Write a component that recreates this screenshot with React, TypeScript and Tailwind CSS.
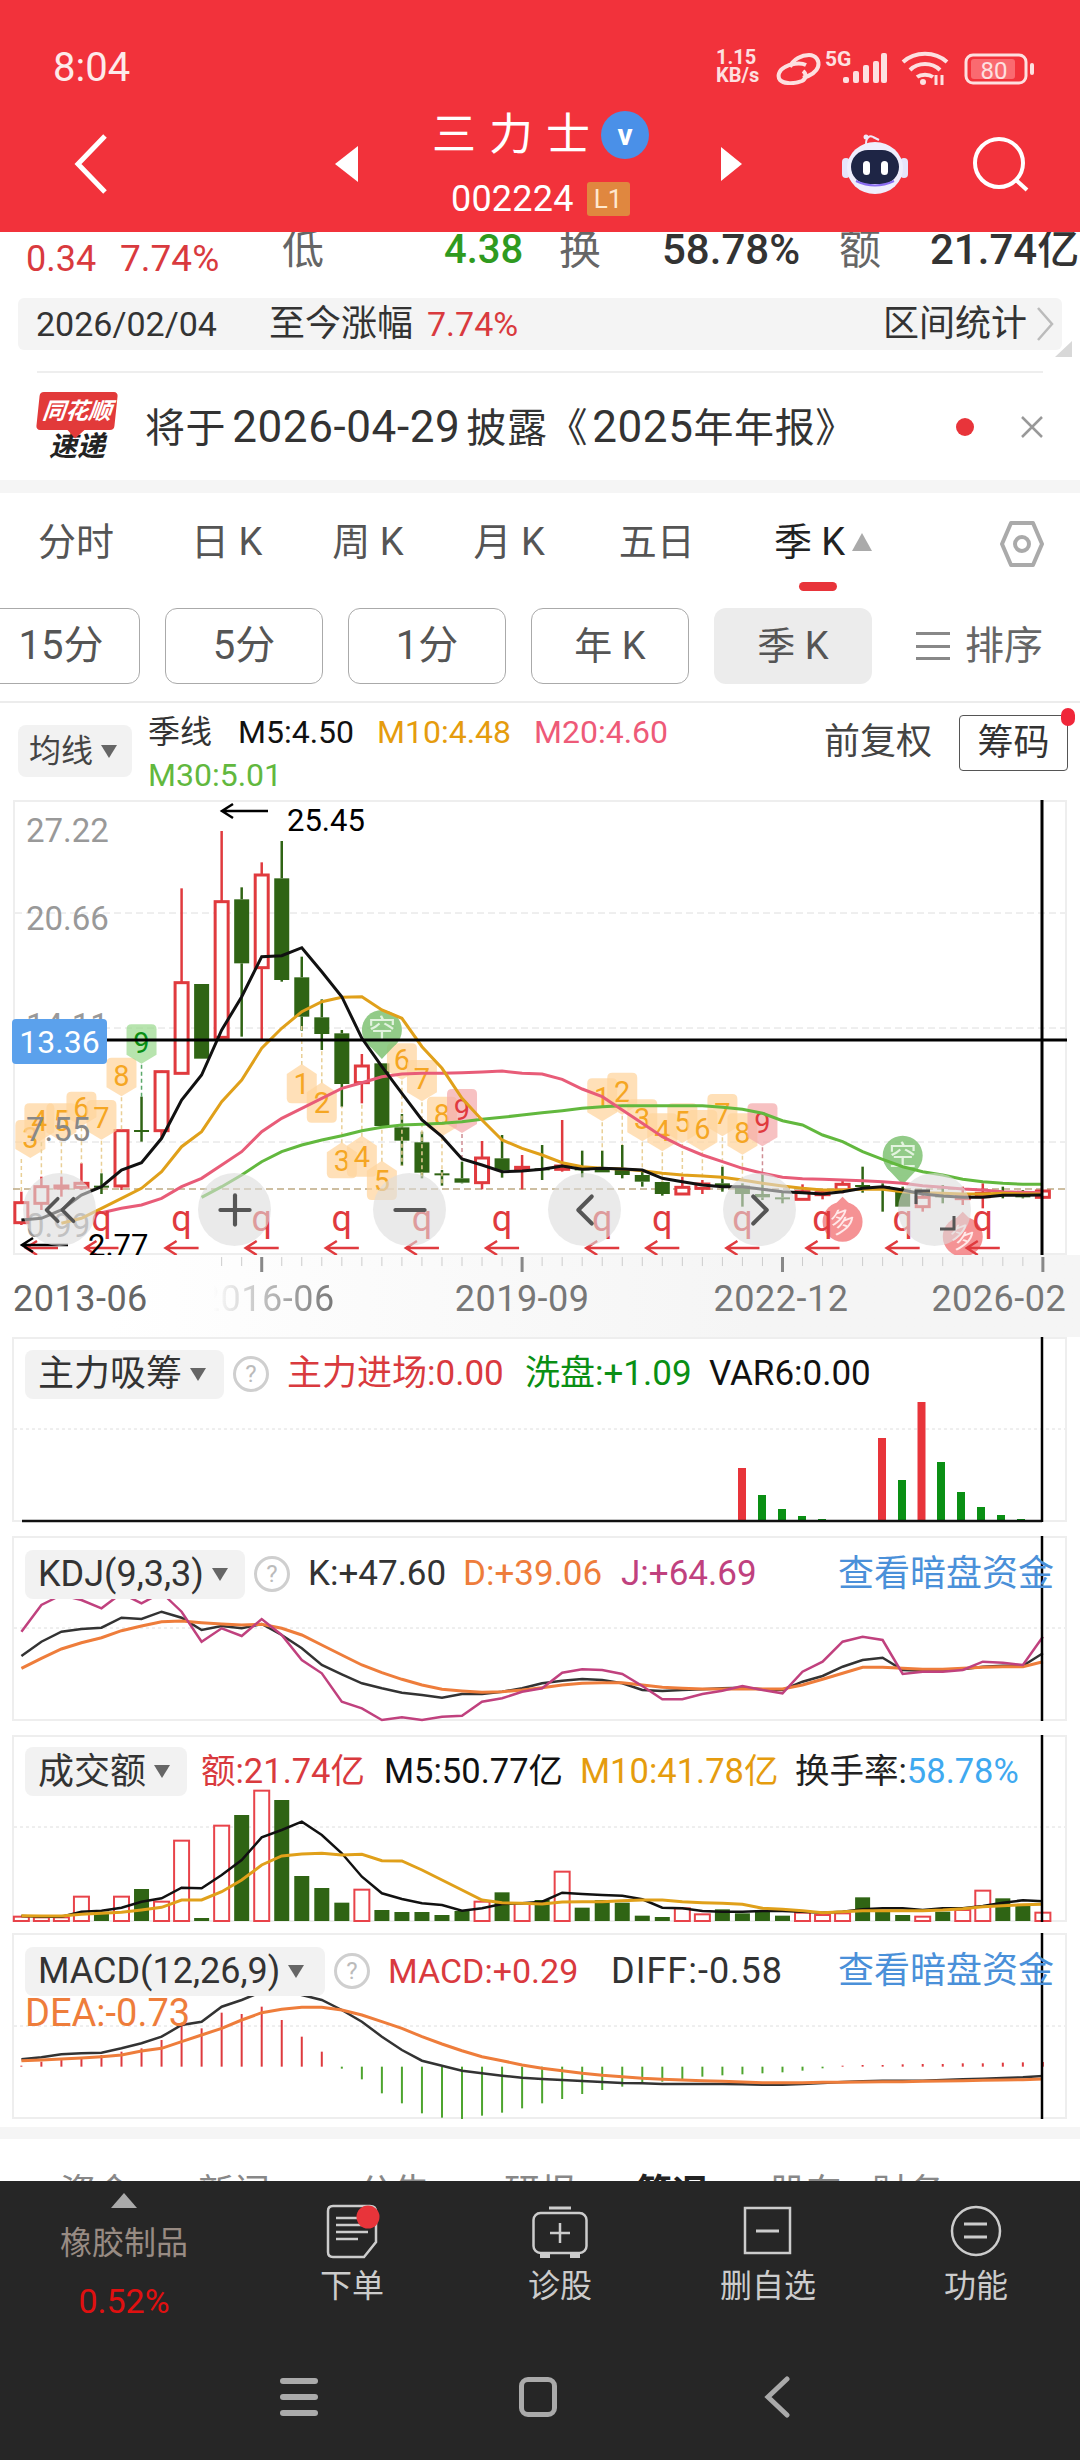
import React from 'react';
import { ChevronsLeft, ChevronLeft, ChevronRight, Plus, Minus } from 'lucide-react';

const RED = '#e03a3e';
const GREEN = '#2f6414';

// every series has one point per quarter, x comes from the index
const X = (i: number) => 21.35 + 20.03 * i;
// y values were read off at 3x, so they are divided back down here
const toY = (base: number) => (z: number) => base + z / 3;

// [high, top, bottom, low, up?]
const candles: [number, number, number, number, number][] = [
  [1205, 1238, 1298, 1305, 1], [1160, 1190, 1240, 1260, 1], [1160, 1188, 1192, 1220, 1], [1120, 1180, 1192, 1200, 1],
  [1150, 1187, 1190, 1212, 0], [1020, 1022, 1188, 1200, 1], [920, 1020, 1024, 1055, 0], [842, 845, 1022, 1045, 1],
  [295, 578, 850, 850, 1], [582, 582, 806, 806, 0], [123, 335, 742, 742, 1], [292, 328, 520, 740, 0],
  [217, 255, 533, 750, 1], [153, 265, 570, 575, 0], [500, 562, 680, 722, 0], [628, 682, 732, 780, 0],
  [720, 730, 882, 950, 0], [792, 828, 878, 940, 1], [820, 820, 1008, 1008, 0], [972, 1012, 1052, 1127, 0],
  [1025, 1057, 1148, 1165, 0], [1140, 1150, 1154, 1187, 0], [1115, 1165, 1178, 1180, 0], [1053, 1104, 1178, 1198, 1],
  [1035, 1105, 1140, 1163, 0], [1095, 1132, 1136, 1198, 1], [1065, 1135, 1140, 1170, 0], [990, 1128, 1138, 1145, 1],
  [1082, 1135, 1140, 1162, 0], [1082, 1135, 1147, 1147, 0], [1065, 1140, 1155, 1165, 0], [1140, 1155, 1175, 1190, 0],
  [1175, 1176, 1212, 1217, 0], [1160, 1192, 1212, 1215, 1], [1170, 1182, 1195, 1212, 1], [1130, 1180, 1188, 1205, 0],
  [1180, 1187, 1212, 1250, 0], [1150, 1212, 1222, 1230, 0], [1205, 1222, 1226, 1240, 0], [1183, 1205, 1228, 1230, 1],
  [1200, 1208, 1212, 1228, 1], [1170, 1183, 1200, 1210, 1], [1130, 1185, 1190, 1208, 0], [1180, 1188, 1195, 1265, 0],
  [1190, 1205, 1250, 1250, 0], [1205, 1222, 1250, 1265, 1], [1185, 1215, 1222, 1240, 0], [1190, 1220, 1225, 1245, 1],
  [1180, 1210, 1220, 1255, 1], [1190, 1212, 1218, 1225, 0], [1200, 1215, 1222, 1225, 0], [1200, 1203, 1222, 1225, 1],
];

const ma5 = [1290, 1285, 1260, 1215, 1190, 1140, 1118, 1045, 930, 855, 720, 620, 500, 497, 473, 545, 620, 745, 830, 910, 990, 1040, 1107, 1125, 1145, 1143, 1138, 1128, 1138, 1135, 1137, 1140, 1165, 1175, 1185, 1190, 1190, 1198, 1205, 1208, 1212, 1205, 1195, 1190, 1200, 1212, 1218, 1222, 1222, 1216, 1216, 1215];
const ma10 = [1300, 1285, 1255, 1225, 1195, 1145, 1070, 1025, 935, 870, 775, 715, 665, 635, 622, 620, 660, 685, 770, 835, 925, 990, 1050, 1075, 1095, 1118, 1130, 1135, 1137, 1142, 1150, 1155, 1158, 1162, 1170, 1180, 1188, 1195, 1200, 1200, 1198, 1198, 1205, 1208, 1210, 1212, 1212, 1210, 1212, 1212];
const ma20 = [1268, 1255, 1245, 1225, 1190, 1165, 1125, 1085, 1025, 985, 955, 925, 895, 878, 860, 852, 850, 850, 848, 846, 843, 850, 852, 868, 897, 920, 960, 1000, 1040, 1070, 1095, 1115, 1135, 1150, 1162, 1166, 1168, 1170, 1172, 1175, 1180, 1187, 1192, 1197, 1200, 1205, 1207, 1208];
const ma30 = [1222, 1190, 1155, 1115, 1085, 1065, 1050, 1037, 1022, 1012, 1005, 1003, 1000, 995, 988, 982, 975, 968, 962, 955, 950, 947, 947, 947, 947, 947, 952, 958, 970, 992, 1005, 1035, 1055, 1085, 1108, 1130, 1145, 1155, 1168, 1175, 1180, 1183, 1183];

const kdjJ = [935, 855, 825, 840, 865, 820, 850, 818, 875, 965, 925, 948, 897, 945, 1020, 1060, 1145, 1165, 1200, 1192, 1200, 1190, 1187, 1145, 1135, 1115, 1105, 1058, 1048, 1050, 1062, 1098, 1138, 1138, 1122, 1112, 1098, 1110, 1120, 1055, 1025, 965, 950, 960, 1062, 1055, 1055, 1050, 1025, 1028, 1035, 950];
const kdjK = [1008, 965, 935, 927, 923, 893, 897, 875, 893, 930, 918, 925, 912, 945, 985, 1035, 1063, 1090, 1105, 1118, 1125, 1133, 1122, 1122, 1115, 1105, 1090, 1082, 1077, 1080, 1090, 1110, 1113, 1110, 1108, 1105, 1103, 1108, 1110, 1085, 1068, 1040, 1020, 1013, 1050, 1052, 1050, 1048, 1040, 1037, 1037, 1000];
const kdjD = [1045, 1015, 987, 968, 953, 932, 918, 905, 903, 908, 912, 915, 913, 925, 945, 975, 1005, 1035, 1058, 1078, 1095, 1108, 1113, 1117, 1115, 1110, 1103, 1095, 1090, 1088, 1088, 1095, 1102, 1105, 1107, 1107, 1106, 1107, 1107, 1095, 1078, 1060, 1042, 1042, 1045, 1048, 1048, 1045, 1042, 1040, 1040, 1025];

// [top, up?]
const volume: [number, number][] = [
  [590, 1], [592, 1], [592, 1], [530, 1], [575, 0], [530, 1], [507, 0], [545, 1], [362, 1], [594, 0], [317, 1], [285, 0], [212, 1],
  [240, 0], [468, 0], [504, 0], [548, 0], [509, 1], [570, 0], [576, 0], [576, 0], [585, 0], [573, 0], [545, 1], [517, 0], [550, 1],
  [540, 0], [455, 1], [563, 0], [540, 0], [548, 0], [587, 0], [591, 0], [565, 1], [583, 1], [568, 0], [580, 0], [573, 0], [587, 0],
  [578, 1], [585, 1], [580, 1], [532, 0], [575, 0], [585, 0], [590, 1], [575, 0], [570, 1], [512, 1], [535, 0], [555, 0], [578, 1],
];
const volM5 = [588, 590, 590, 575, 572, 563, 545, 535, 503, 505, 465, 420, 352, 330, 305, 345, 400, 470, 520, 537, 550, 555, 572, 565, 552, 550, 545, 518, 522, 525, 527, 538, 563, 565, 573, 575, 575, 573, 573, 575, 578, 575, 568, 565, 565, 570, 565, 565, 558, 548, 541, 544];
const volM10 = [587, 588, 588, 583, 580, 577, 570, 562, 540, 540, 515, 480, 435, 408, 402, 400, 405, 403, 422, 423, 450, 480, 510, 540, 548, 550, 552, 546, 545, 545, 542, 540, 540, 545, 548, 550, 553, 565, 568, 572, 578, 575, 572, 572, 572, 572, 570, 566, 560, 557, 554, 553];

const macdBars = [1037, 1025, 1020, 1015, 1005, 995, 985, 960, 908, 925, 878, 882, 860, 900, 950, 995, 1046, 1078, 1120, 1150, 1180, 1193, 1197, 1187, 1178, 1165, 1150, 1137, 1122, 1110, 1100, 1090, 1085, 1078, 1070, 1066, 1063, 1060, 1057, 1052, 1045, 1037, 1035, 1035, 1033, 1032, 1032, 1030, 1030, 1028, 1027, 1026];
const diff = [1018, 1012, 1003, 1000, 998, 985, 970, 950, 915, 905, 860, 840, 815, 813, 825, 840, 870, 905, 950, 990, 1022, 1037, 1052, 1060, 1067, 1073, 1077, 1080, 1083, 1086, 1089, 1090, 1092, 1092, 1092, 1092, 1093, 1094, 1094, 1092, 1089, 1086, 1084, 1082, 1082, 1082, 1080, 1078, 1076, 1074, 1072, 1068];
const dea = [1022, 1020, 1017, 1014, 1010, 1005, 993, 985, 965, 945, 925, 900, 878, 868, 862, 862, 870, 885, 905, 925, 950, 972, 992, 1010, 1022, 1035, 1045, 1052, 1060, 1066, 1070, 1075, 1078, 1080, 1082, 1084, 1086, 1088, 1088, 1088, 1087, 1087, 1086, 1085, 1085, 1084, 1083, 1082, 1081, 1080, 1079, 1077];

// sequence badges, top/bot/end in the same 3x values as the candles
const badges: { i: number; top: number; bot: number; end: number; t: string; kind?: string; dx?: number }[] = [
  { i: 0, top: 990, bot: 1095, end: 1205, t: '3', dx: 9 },
  { i: 1, top: 940, bot: 1045, end: 1160, t: '4', dx: -2 },
  { i: 2, top: 940, bot: 1045, end: 1160, t: '5' },
  { i: 3, top: 905, bot: 1000, end: 1120, t: '6' },
  { i: 4, top: 930, bot: 1040, end: 1150, t: '7' },
  { i: 5, top: 803, bot: 910, end: 1020, t: '8' },
  { i: 6, top: 703, bot: 812, end: 920, t: '9', kind: 'green' },
  { i: 14, top: 825, bot: 940, end: 700, t: '1' },
  { i: 15, top: 880, bot: 998, end: 780, t: '2' },
  { i: 16, top: 1060, bot: 1165, end: 950, t: '3' },
  { i: 17, top: 1040, bot: 1160, end: 940, t: '4' },
  { i: 18, top: 1115, bot: 1230, end: 1008, t: '5' },
  { i: 19, top: 760, bot: 860, end: 1127, t: '6' },
  { i: 20, top: 810, bot: 925, end: 1165, t: '7' },
  { i: 21, top: 920, bot: 1030, end: 1187, t: '8' },
  { i: 22, top: 897, bot: 1020, end: 1115, t: '9', kind: 'red' },
  { i: 29, top: 865, bot: 985, end: 1082, t: '1' },
  { i: 30, top: 848, bot: 965, end: 1065, t: '2' },
  { i: 31, top: 928, bot: 1045, end: 1140, t: '3' },
  { i: 32, top: 970, bot: 1075, end: 1175, t: '4' },
  { i: 33, top: 940, bot: 1050, end: 1160, t: '5' },
  { i: 34, top: 960, bot: 1075, end: 1170, t: '6' },
  { i: 35, top: 912, bot: 1030, end: 1130, t: '7' },
  { i: 36, top: 970, bot: 1085, end: 1180, t: '8' },
  { i: 37, top: 940, bot: 1060, end: 1150, t: '9', kind: 'red' },
];

const qMarks = [4, 8, 12, 16, 20, 24, 29, 32, 36, 40, 44, 48];

const line = (data: number[], start: number, y: (z: number) => number) =>
  data.map((z, k) => `${k ? 'L' : 'M'}${X(k + start).toFixed(1)} ${y(z).toFixed(1)}`).join(' ');

const Arrow = ({ x1, x2, y, color, w = 2.5 }: { x1: number; x2: number; y: number; color: string; w?: number }) => (
  <path d={`M${x1 + 11} ${y - 7} L${x1} ${y} L${x1 + 11} ${y + 7} M${x1} ${y} L${x2} ${y}`} stroke={color} strokeWidth={w} fill="none" />
);

const Badge = ({ b, y }: { b: (typeof badges)[number]; y: (z: number) => number }) => {
  const cx = X(b.i) + (b.dx || 0);
  const top = y(b.top);
  const bot = y(b.bot);
  const fill = b.kind === 'red' ? '#f4a9ab' : b.kind === 'green' ? '#9bd98f' : '#ffd49c';
  const color = b.kind === 'red' ? RED : b.kind === 'green' ? '#0a8f14' : '#f5a623';
  const up = b.end < b.top;
  const stemFrom = up ? top : bot + 4;
  return (
    <g>
      <line x1={X(b.i)} x2={X(b.i)} y1={stemFrom} y2={y(b.end)} stroke={b.kind === 'red' ? '#cf8d93' : b.kind === 'green' ? '#5ba86a' : '#e9cf96'} strokeWidth={1.5} strokeDasharray="4 3" />
      <path
        d={
          up
            ? `M${cx - 15} ${top + 9} L${cx} ${top - 1} L${cx + 15} ${top + 9} L${cx + 15} ${bot - 5} Q${cx + 15} ${bot} ${cx + 10} ${bot} L${cx - 10} ${bot} Q${cx - 15} ${bot} ${cx - 15} ${bot - 5} Z`
            : `M${cx - 10} ${top} L${cx + 10} ${top} Q${cx + 15} ${top} ${cx + 15} ${top + 5} L${cx + 15} ${bot - 6} L${cx} ${bot + 3} L${cx - 15} ${bot - 6} L${cx - 15} ${top + 5} Q${cx - 15} ${top} ${cx - 10} ${top} Z`
        }
        fill={fill}
        opacity={0.72}
      />
      <text x={cx} y={(top + bot) / 2 + 10} textAnchor="middle" fontSize={29} fill={color}>{b.t}</text>
    </g>
  );
};

const PinUp = ({ cx, cy, label }: { cx: number; cy: number; label: string }) => (
  <g opacity={0.85}>
    <path d={`M${cx - 16} ${cy + 12} L${cx} ${cy + 29} L${cx + 16} ${cy + 12} Z`} fill="#7fc274" />
    <circle cx={cx} cy={cy} r={20} fill="#7fc274" />
    <text x={cx} y={cy + 10} textAnchor="middle" fontSize={28} fill="#dff2da">{label}</text>
  </g>
);

const PinDown = ({ cx, cy, label }: { cx: number; cy: number; label: string }) => (
  <g opacity={0.85}>
    <path d={`M${cx - 15} ${cy - 10} L${cx} ${cy - 25} L${cx + 15} ${cy - 10} Z`} fill="#f47f82" />
    <circle cx={cx} cy={cy} r={20} fill="#f47f82" />
    <text x={cx} y={cy + 9} textAnchor="middle" fontSize={26} fill="#ffe6e6" transform={`rotate(-20 ${cx} ${cy})`}>{label}</text>
  </g>
);

const PriceChart = () => {
  const y = toY(790);
  return (
    <svg viewBox="15 802 1050 451" className="absolute left-0 top-0 w-[1050px] h-[451px] overflow-visible">
      {[913, 1028, 1142].map((g) => (
        <line key={g} x1={15} x2={1065} y1={g} y2={g} stroke="#dedede" strokeWidth={1} strokeDasharray="7 4" />
      ))}
      <line x1={13} x2={1065} y1={1189} y2={1189} stroke="#bda982" strokeWidth={1.5} strokeDasharray="7 4" />
      <text x={26} y={842} fontSize={33} fill="#999">27.22</text>
      <text x={26} y={930} fontSize={33} fill="#999">20.66</text>
      <text x={26} y={1037} fontSize={33} fill="#999">14.11</text>
      <text x={26} y={1237} fontSize={33} fill="#999">0.99</text>
      {candles.map(([hi, top, bot, lo, up], i) => {
        const cx = X(i);
        const color = up ? RED : GREEN;
        return (
          <g key={i}>
            <line x1={cx} x2={cx} y1={y(hi)} y2={y(top)} stroke={color} strokeWidth={2.5} />
            <line x1={cx} x2={cx} y1={y(bot)} y2={y(lo)} stroke={color} strokeWidth={2.5} />
            <rect
              x={cx - (up ? 6.5 : 7.5)}
              y={y(top)}
              width={up ? 13 : 15}
              height={Math.max(y(bot) - y(top), 2)}
              fill={up ? '#fff' : GREEN}
              stroke={up ? color : 'none'}
              strokeWidth={3}
            />
          </g>
        );
      })}
      {badges.map((b) => (
        <Badge key={`${b.i}`} b={b} y={y} />
      ))}
      <PinUp cx={X(18)} cy={y(720)} label="空" />
      <PinUp cx={X(44)} cy={y(1097)} label="空" />
      <path d={line(ma30, 9, y)} fill="none" stroke="#62b83e" strokeWidth={3} />
      <path d={line(ma20, 4, y)} fill="none" stroke="#e85c78" strokeWidth={3} />
      <path d={line(ma10, 2, y)} fill="none" stroke="#e0a01a" strokeWidth={3} />
      <path d={line(ma5, 0, y)} fill="none" stroke="#111" strokeWidth={3} />
      <PinDown cx={X(41)} cy={y(1295)} label="多" />
      <PinDown cx={X(47)} cy={y(1340)} label="多" />
      <line x1={107} x2={1067} y1={1040} y2={1040} stroke="#000" strokeWidth={3} />
      <line x1={1042} x2={1042} y1={800} y2={1258} stroke="#000" strokeWidth={3} />
      {qMarks.map((i) => (
        <g key={i}>
          <text x={X(i)} y={1231} textAnchor="middle" fontSize={36} fill={RED}>q</text>
          <Arrow x1={X(i) - 16} x2={X(i) + 17} y={1248} color={RED} />
        </g>
      ))}
      <Arrow x1={26} x2={58} y={1248} color={RED} />
      <Arrow x1={22} x2={68} y={1245} color="#000" />
      <text x={88} y={1256} fontSize={31} fill="#000">2.77</text>
      <Arrow x1={222} x2={268} y={811} color="#000" />
      <text x={287} y={831} fontSize={31} fill="#000">25.45</text>
      <text x={26} y={1141} fontSize={33} fill="#888">7.55</text>
    </svg>
  );
};

const MoneyFlow = () => {
  const bars: [number, number, string][] = [
    [742, 1468, '#e8343a'], [762, 1495, '#0a8f14'], [782, 1509, '#0a8f14'], [802, 1516, '#0a8f14'], [822, 1519, '#0a8f14'], [862, 1520, '#0a8f14'],
    [882, 1438, '#e8343a'], [902, 1480, '#0a8f14'], [921.5, 1402, '#e8343a'], [941, 1462, '#0a8f14'], [961, 1492, '#0a8f14'], [981, 1507, '#0a8f14'], [1001, 1515, '#0a8f14'], [1021, 1519, '#0a8f14'],
  ];
  return (
    <svg viewBox="14 1339 1051 181" className="absolute left-0 top-0 w-[1051px] h-[181px] overflow-visible">
      <line x1={14} x2={1065} y1={1429} y2={1429} stroke="#dedede" strokeDasharray="3 3" />
      {bars.map(([x, top, c]) => (
        <rect key={x} x={x - 4} y={top} width={8} height={1521 - top} fill={c} />
      ))}
      <line x1={22} x2={1042} y1={1521} y2={1521} stroke="#111" strokeWidth={2.5} />
      <line x1={1042} x2={1042} y1={1337} y2={1522} stroke="#000" strokeWidth={2.5} />
    </svg>
  );
};

const Kdj = () => {
  const y = toY(1320);
  return (
    <svg viewBox="14 1538 1051 181" className="absolute left-0 top-0 w-[1051px] h-[181px] overflow-visible">
      <line x1={14} x2={1065} y1={1628} y2={1628} stroke="#dedede" strokeDasharray="3 3" />
      <path d={line(kdjK, 0, y)} fill="none" stroke="#333" strokeWidth={2.5} />
      <path d={line(kdjD, 0, y)} fill="none" stroke="#ee7d3b" strokeWidth={3} />
      <path d={line(kdjJ, 0, y)} fill="none" stroke="#c0417e" strokeWidth={2.5} />
      <line x1={1042} x2={1042} y1={1536} y2={1721} stroke="#000" strokeWidth={2.5} />
    </svg>
  );
};

const Turnover = () => {
  const y = toY(1720);
  return (
    <svg viewBox="14 1737 1051 183" className="absolute left-0 top-0 w-[1051px] h-[183px] overflow-visible">
      <line x1={14} x2={1065} y1={1827} y2={1827} stroke="#dedede" strokeDasharray="3 3" />
      {volume.map(([top, up], i) => (
        <rect
          key={i}
          x={X(i) - 7.5}
          y={y(top)}
          width={15}
          height={y(603) - y(top)}
          fill={up ? '#fff' : GREEN}
          stroke={up ? '#e8434a' : 'none'}
          strokeWidth={2}
        />
      ))}
      <path d={line(volM5, 0, y)} fill="none" stroke="#111" strokeWidth={2.5} />
      <path d={line(volM10, 0, y)} fill="none" stroke="#e0a01a" strokeWidth={3} />
      <line x1={1042} x2={1042} y1={1735} y2={1922} stroke="#000" strokeWidth={2.5} />
    </svg>
  );
};

const Macd = () => {
  const y = toY(1720);
  return (
    <svg viewBox="14 1935 1051 182" className="absolute left-0 top-0 w-[1051px] h-[182px] overflow-visible">
      <line x1={14} x2={1065} y1={2026} y2={2026} stroke="#dedede" strokeDasharray="3 3" />
      {macdBars.map((z, i) => (
        <line key={i} x1={X(i)} x2={X(i)} y1={y(1040)} y2={y(z)} stroke={z < 1040 ? '#de3a3e' : '#4ea52f'} strokeWidth={2} />
      ))}
      <path d={line(diff, 0, y)} fill="none" stroke="#333" strokeWidth={2.5} />
      <path d={line(dea, 0, y)} fill="none" stroke="#ee7d3b" strokeWidth={3} />
      <line x1={1042} x2={1042} y1={1933} y2={2119} stroke="#000" strokeWidth={2.5} />
    </svg>
  );
};

const Caret = () => <span className="ml-[8px] w-0 h-0 border-x-[8px] border-x-transparent border-t-[13px] border-t-[#666]" />;

const Help = () => (
  <span className="w-[36px] h-[36px] rounded-full border-[3px] border-[#cfcfcf] flex items-center justify-center text-[24px] leading-none text-[#bbb]">?</span>
);

const IndicatorBox = ({ label, w }: { label: string; w: string }) => (
  <div className={`${w} h-[49px] ml-[11px] shrink-0 rounded-[8px] bg-[#f2f2f2] flex items-center pl-[13px] text-[36px] text-[#333] whitespace-nowrap`}>
    {label}
    <Caret />
  </div>
);

const DarkPool = () => <span className="ml-auto mr-[11px] text-[36px] text-[#4a90d9] whitespace-nowrap">查看暗盘资金</span>;

const ChartButton = ({ left, children }: { left: string; children: React.ReactNode }) => (
  <div className={`absolute ${left} top-[371px] w-[73px] h-[73px] rounded-full bg-[#dcdcdc]/60 flex items-center justify-center text-[#555]`}>{children}</div>
);

const Status = () => (
  <div className="h-[96px] pt-[40px] flex items-start text-white">
    <span className="ml-[53px] text-[40px] leading-[56px] w-[663px] text-[#fdeaea]">8:04</span>
    <div className="flex flex-col w-[60px] mt-[8px] text-[20px] leading-[18px] font-bold text-[#fde0e0]">
      <span>1.15</span>
      <span>KB/s</span>
    </div>
    <svg width="46" height="32" viewBox="0 0 46 32" className="mt-[13px]" fill="none" stroke="#fde0e0" strokeWidth="4">
      <path d="M14 14 C17 6 26 2 33 2 C40 2 44 8 42 14 C40 20 33 23 27 25" />
      <path d="M30 12 C24 9 14 11 9 14 C3 17 1 23 4 27 C8 31 18 31 26 28 C30 26 31 21 27 18" />
    </svg>
    <svg width="64" height="36" viewBox="0 0 64 36" className="mt-[9px] ml-[3px]" fill="#fde0e0">
      <text x="0" y="17" fontSize="21" fontWeight="700">5G</text>
      <rect x="18" y="28" width="6" height="6" rx="2" />
      <rect x="28" y="22" width="6" height="12" rx="2" />
      <rect x="38" y="16" width="6" height="18" rx="2" />
      <rect x="48" y="12" width="6" height="22" rx="2" />
      <rect x="56" y="4" width="6" height="30" rx="2" />
    </svg>
    <svg width="48" height="36" viewBox="0 0 48 36" className="mt-[11px] ml-[12px]" fill="none" stroke="#fde0e0" strokeWidth="4">
      <path d="M2 11 C14 0 34 0 46 11" />
      <path d="M9 19 C17 11 31 11 39 19" />
      <path d="M16 26 C20 23 28 23 32 26" />
      <circle cx="22" cy="31" r="3" fill="#fde0e0" stroke="none" />
      <path d="M35 24 L35 34 M41 24 L41 34" strokeWidth="3" />
    </svg>
    <svg width="72" height="32" viewBox="0 0 72 32" className="mt-[13px] ml-[15px]">
      <rect x="2" y="2" width="60" height="28" rx="7" fill="none" stroke="#fde0e0" strokeWidth="3" />
      <rect x="7" y="6" width="44" height="20" rx="3" fill="#fa6a70" />
      <rect x="66" y="10" width="4" height="12" rx="2" fill="#fde0e0" />
      <text x="30" y="26" fontSize="24" textAnchor="middle" fill="#fde0e0">80</text>
    </svg>
  </div>
);

const NavBar = () => (
  <div className="h-[136px] flex items-center text-white">
    <svg width="33" height="60" viewBox="0 0 33 60" className="ml-[74px]" fill="none" stroke="#fff" strokeWidth="5">
      <path d="M31 2 L4 30 L31 58" />
    </svg>
    <span className="ml-[228px] w-0 h-0 border-y-[18px] border-y-transparent border-r-[23px] border-r-white" />
    <div className="ml-[74px] w-[217px] h-full pt-[15px] flex flex-col">
      <div className="h-[48px] flex items-center">
        <span className="w-[169px] text-[44px] leading-none tracking-[13px] whitespace-nowrap">三力士</span>
        <span className="w-[48px] h-[48px] rounded-full bg-[#4a90e8] flex items-center justify-center text-[30px] font-bold leading-none">v</span>
      </div>
      <div className="mt-[23px] ml-[19px] flex items-center">
        <span className="text-[36px] leading-[34px] tracking-[0.2px]">002224</span>
        <span className="ml-[13px] w-[43px] h-[34px] rounded-[3px] bg-[#e0873f] flex items-center justify-center text-[26px] leading-none text-[#ffe8cf]">L1</span>
      </div>
    </div>
    <span className="ml-[72px] w-0 h-0 border-y-[17px] border-y-transparent border-l-[21px] border-l-white" />
    <svg width="66" height="60" viewBox="0 0 66 60" className="ml-[100px]">
      <path d="M24 10 C24 3 28 1 31 3 M31 3 L37 6" fill="none" stroke="#f0e8f8" strokeWidth="2" />
      <circle cx="24" cy="3" r="2.5" fill="#f0e8f8" />
      <rect x="0" y="24" width="8" height="20" rx="4" fill="#e6e4fa" />
      <rect x="58" y="24" width="8" height="20" rx="4" fill="#e6e4fa" />
      <ellipse cx="33" cy="34" rx="28" ry="26" fill="#efeefc" />
      <rect x="9" y="16" width="48" height="34" rx="17" fill="#1e2545" />
      <path d="M14 47 Q33 56 52 47" fill="none" stroke="#8a6df0" strokeWidth="2" />
      <rect x="21" y="27" width="7" height="14" rx="3.5" fill="#fff" />
      <rect x="39" y="27" width="7" height="14" rx="3.5" fill="#fff" />
    </svg>
    <svg width="56" height="56" viewBox="0 0 56 56" className="ml-[65px]" fill="none" stroke="#fff" strokeWidth="4">
      <circle cx="26" cy="27" r="24" />
      <path d="M43 44 L54 54" />
    </svg>
  </div>
);

const StatsRow = () => (
  <div className="h-[66px] overflow-hidden flex items-start pl-[26px] whitespace-nowrap">
    <span className="w-[94px] mt-[7px] text-[36px] leading-[40px] text-[#d93a3e]">0.34</span>
    <span className="w-[162px] mt-[7px] text-[37px] leading-[40px] text-[#d93a3e]">7.74%</span>
    <span className="w-[162px] -mt-[2px] text-[42px] leading-[40px] text-[#666]">低</span>
    <span className="w-[115px] -mt-[2px] text-[40px] leading-[40px] font-medium text-[#2f9a1f]">4.38</span>
    <span className="w-[103px] -mt-[2px] text-[42px] leading-[40px] text-[#666]">换</span>
    <span className="w-[177px] -mt-[2px] text-[42px] leading-[40px] font-medium text-[#333]">58.78%</span>
    <span className="w-[91px] -mt-[2px] text-[42px] leading-[40px] text-[#666]">额</span>
    <span className="-mt-[2px] text-[42px] leading-[40px] font-medium text-[#333]">21.74亿</span>
  </div>
);

const RangeBar = () => (
  <div className="relative mx-[18px] h-[52px] rounded-[6px] bg-[#f4f4f4] flex items-center whitespace-nowrap text-[#333]">
    <span className="ml-[18px] w-[233px] text-[34px]">2026/02/04</span>
    <span className="w-[158px] text-[36px]">至今涨幅</span>
    <span className="text-[34px] text-[#d93a3e]">7.74%</span>
    <span className="ml-auto text-[36px]">区间统计</span>
    <svg width="18" height="34" viewBox="0 0 18 34" className="ml-[9px] mr-[8px]" fill="none" stroke="#bbb" strokeWidth="2.5">
      <path d="M2 1 L16 17 L2 33" />
    </svg>
    <svg width="17" height="16" viewBox="0 0 17 16" className="absolute right-[-10px] bottom-[-7px]">
      <path d="M17 0 L17 16 L0 16 Z" fill="#d8d8d8" />
    </svg>
  </div>
);

const Notice = () => (
  <div className="mx-[37px] mt-[21px] h-[109px] border-t-2 border-t-[#eeeeee] flex items-center whitespace-nowrap">
    <div className="w-[80px] flex flex-col items-center">
      <div className="relative w-[78px] h-[38px] rounded-[4px] bg-[#e23a3a] -skew-x-6 flex items-center justify-center text-[23px] leading-none font-bold italic text-white">
        同花顺
        <span className="absolute bottom-[-6px] left-[34px] w-[12px] h-[12px] rotate-45 bg-[#e23a3a]" />
      </div>
      <span className="mt-[3px] text-[28px] leading-[28px] font-bold italic text-[#222]">速递</span>
    </div>
    <span className="ml-[28px] text-[40px] tracking-[0.6px] text-[#333]">
      将于<span className="mx-[6px] text-[44px]">2026-04-29</span>披露《<span className="ml-[4px] text-[44px]">2025</span>年年报》
    </span>
    <span className="ml-auto w-[18px] h-[18px] rounded-full bg-[#e8343a]" />
    <svg width="24" height="24" viewBox="0 0 24 24" className="ml-[46px] mr-[-1px]" fill="none" stroke="#999" strokeWidth="2.5">
      <path d="M2 2 L22 22 M22 2 L2 22" />
    </svg>
  </div>
);

const PeriodTabs = () => (
  <div className="relative h-[115px] pt-[26px] flex items-start text-[38px] leading-[46px] text-[#555] whitespace-nowrap">
    <span className="ml-[38px]">分时</span>
    <span className="ml-[77px]">日 K</span>
    <span className="ml-[70px]">周 K</span>
    <span className="ml-[70px]">月 K</span>
    <span className="ml-[74px]">五日</span>
    <span className="ml-[79px] text-[#222]">季 K</span>
    <span className="ml-[7px] mt-[14px] w-0 h-0 border-x-[10px] border-x-transparent border-b-[18px] border-b-[#aaa]" />
    <svg width="44" height="50" viewBox="0 0 44 50" className="ml-[128px]" fill="none" stroke="#aaa" strokeWidth="4">
      <path d="M11 4 L33 4 L42 25 L33 46 L11 46 L2 25 Z" strokeLinejoin="round" />
      <circle cx="22" cy="25" r="7" />
    </svg>
    <span className="absolute left-[799px] top-[89px] w-[38px] h-[9px] rounded-full bg-[#e8343a]" />
  </div>
);

const RangeTabs = () => (
  <div className="h-[95px] -ml-[18px] flex items-start gap-[25px] border-b-2 border-b-[#ececec] text-[38px] text-[#555] whitespace-nowrap">
    {['15分', '5分', '1分'].map((t) => (
      <div key={t} className="w-[158px] h-[76px] rounded-[12px] border border-[#aaaaaa] flex items-center justify-center text-[40px]">
        {t}
      </div>
    ))}
    <div className="w-[158px] h-[76px] rounded-[12px] border border-[#aaaaaa] flex items-center justify-center">年 K</div>
    <div className="w-[158px] h-[76px] rounded-[12px] bg-[#ececec] flex items-center justify-center">季 K</div>
    <div className="h-[76px] ml-[19px] flex items-center text-[#666]">
      <span className="w-[34px] h-[28px] border-y-[3px] border-y-[#888] flex items-center">
        <span className="w-full h-[3px] bg-[#888]" />
      </span>
      <span className="ml-[15px] text-[39px]">排序</span>
    </div>
  </div>
);

const MaLegend = () => (
  <div className="h-[97px] flex items-start whitespace-nowrap">
    <div className="ml-[18px] mt-[22px] w-[114px] h-[52px] rounded-[8px] bg-[#f2f2f2] flex items-center pl-[11px] text-[32px] text-[#444]">
      均线
      <Caret />
    </div>
    <div className="ml-[16px] mt-[8px] w-[676px] text-[32px] leading-[43px]">
      <div className="flex">
        <span className="w-[90px] text-[#333]">季线</span>
        <span className="w-[139px] text-[#111]">M5:4.50</span>
        <span className="w-[157px] text-[#e59c0e]">M10:4.48</span>
        <span className="text-[#ee5a78]">M20:4.60</span>
      </div>
      <div className="text-[#62b83e]">M30:5.01</div>
    </div>
    <span className="mt-[14px] text-[36px] leading-[50px] text-[#444]">前复权</span>
    <div className="relative ml-[27px] mt-[12px] w-[109px] h-[56px] rounded-[4px] border border-[#555] flex items-center justify-center text-[36px] text-[#333]">
      筹码
      <span className="absolute right-[-8px] top-[-8px] w-[14px] h-[18px] rounded-full bg-[#f0273a]" />
    </div>
  </div>
);

const MainChart = () => (
  <div className="relative ml-[13px] w-[1054px] h-[455px] border-2 border-[#eeeeee]">
    <PriceChart />
    <div className="absolute left-[-3px] top-[217px] w-[95px] h-[45px] rounded-[4px] bg-[#5ba1ec] flex items-center justify-center text-[32px] text-white">13.36</div>
    <ChartButton left="left-[8px]">
      <ChevronsLeft size={54} strokeWidth={1.6} />
    </ChartButton>
    <ChartButton left="left-[183px]">
      <Plus size={50} strokeWidth={2} />
    </ChartButton>
    <ChartButton left="left-[358px]">
      <Minus size={50} strokeWidth={2} />
    </ChartButton>
    <ChartButton left="left-[533px]">
      <ChevronLeft size={54} strokeWidth={1.8} />
    </ChartButton>
    <ChartButton left="left-[708px]">
      <ChevronRight size={54} strokeWidth={1.8} />
    </ChartButton>
    <ChartButton left="left-[883px]">
      <svg width="44" height="44" viewBox="0 0 44 44" fill="none" stroke="#555" strokeWidth="3">
        <path d="M3 16 L3 3 L17 3 M41 28 L41 41 L27 41" />
      </svg>
    </ChartButton>
  </div>
);

const TimeAxis = () => {
  const ticks = Array.from({ length: 42 }, (_, k) => k + 10);
  return (
    <div className="relative h-[82px] bg-linear-to-r from-white from-10% to-[#f5f5f5] to-70% whitespace-nowrap">
      <svg width="1080" height="18" viewBox="0 1255 1080 18" className="block">
        {ticks.map((i) => {
          const major = i === 12 || i === 25 || i === 38 || i === 51;
          return <line key={i} x1={X(i)} x2={X(i)} y1={1257} y2={major ? 1272 : 1266} stroke={major ? '#888' : '#ccc'} strokeWidth={major ? 3 : 1} />;
        })}
      </svg>
      <div className="mt-[5px] flex text-[36px] leading-[42px] tracking-[0.5px] text-[#666]">
        <span className="ml-[13px]">2013-06</span>
        <span className="ml-[52px] bg-linear-to-r from-transparent from-10% via-[#bbbbbb] to-[#777777] bg-clip-text text-transparent">2016-06</span>
        <span className="ml-[120px] text-[#777]">2019-09</span>
        <span className="ml-[124px] text-[#777]">2022-12</span>
        <span className="ml-[83px] text-[#777]">2026-02</span>
      </div>
    </div>
  );
};

const Panels = () => (
  <div className="ml-[12px] w-[1055px] text-[35px] whitespace-nowrap">
    <div className="relative h-[185px] border-2 border-[#eeeeee]">
      <MoneyFlow />
      <div className="relative pt-[9px] flex items-center">
        <IndicatorBox label="主力吸筹" w="w-[199px]" />
        <span className="ml-[9px] shrink-0"><Help /></span>
        <span className="ml-[18px] w-[238px] text-[#d93a3e]">主力进场:0.00</span>
        <span className="w-[184px] text-[#0a8f14]">洗盘:+1.09</span>
        <span className="text-[#111]">VAR6:0.00</span>
      </div>
    </div>
    <div className="relative mt-[14px] h-[185px] border-2 border-[#eeeeee]">
      <Kdj />
      <div className="relative pt-[9px] flex items-center">
        <IndicatorBox label="KDJ(9,3,3)" w="w-[220px]" />
        <span className="ml-[9px] shrink-0"><Help /></span>
        <span className="ml-[18px] w-[155px] text-[#333]">K:+47.60</span>
        <span className="w-[158px] text-[#ee7d3b]">D:+39.06</span>
        <span className="text-[#c0417e]">J:+64.69</span>
        <DarkPool />
      </div>
    </div>
    <div className="relative mt-[14px] h-[187px] border-2 border-[#eeeeee]">
      <Turnover />
      <div className="relative pt-[9px] flex items-center text-[34.5px]">
        <IndicatorBox label="成交额" w="w-[162px]" />
        <span className="ml-[14px] w-[183px] text-[#d93a3e]">额:21.74亿</span>
        <span className="w-[196px] text-[#111]">M5:50.77亿</span>
        <span className="w-[215px] text-[#e59c0e]">M10:41.78亿</span>
        <span className="text-[#222]">换手率:<span className="text-[#3fa9f0]">58.78%</span></span>
      </div>
    </div>
    <div className="relative mt-[11px] h-[186px] border-2 border-[#eeeeee]">
      <Macd />
      <div className="relative pt-[9px] flex items-center">
        <IndicatorBox label="MACD(12,26,9)" w="w-[300px]" />
        <span className="ml-[9px] shrink-0"><Help /></span>
        <span className="ml-[18px] w-[223px] text-[34px] text-[#d93a3e]">MACD:+0.29</span>
        <span className="text-[36px] tracking-[1px] text-[#333]">DIFF:-0.58</span>
        <DarkPool />
      </div>
      <div className="relative ml-[11px] -mt-[2px] text-[38px] leading-[34px] text-[#ee7d3b]">DEA:-0.73</div>
    </div>
  </div>
);

const CutOffTabs = () => (
  <div className="h-[42px] overflow-hidden pt-[36px] flex text-[36px] leading-none text-[#888] whitespace-nowrap">
    <span className="ml-[60px]">资金</span>
    <span className="ml-[66px]">新闻</span>
    <span className="ml-[88px]">公告</span>
    <span className="ml-[74px]">研报</span>
    <span className="ml-[60px] font-bold text-[#222]">简况</span>
    <span className="ml-[62px]">股东</span>
    <span className="ml-[30px]">财务</span>
  </div>
);

const OrderIcon = () => (
  <svg width="56" height="56" viewBox="0 0 56 56" fill="none" stroke="#ccc" strokeWidth="2.5">
    <path d="M9 2 L46 2 Q52 2 52 8 L52 38 L40 53 L9 53 Q4 53 4 48 L4 7 Q4 2 9 2 Z" />
    <path d="M12 14 L33 14 M12 21 L38 21 M12 28 L44 28 M12 35 L34 35" strokeWidth="2.5" />
    <circle cx="44" cy="13" r="11.5" fill="#e8343a" stroke="none" />
  </svg>
);

const DiagnoseIcon = () => (
  <svg width="56" height="56" viewBox="0 0 56 56" fill="none" stroke="#ccc" strokeWidth="2.5">
    <path d="M17 4 L39 4" strokeWidth="3" />
    <rect x="1.5" y="9" width="53" height="40" rx="7" />
    <path d="M28 19 L28 39 M18 29 L38 29" />
    <path d="M8 52 L18 52 M38 52 L48 52" strokeWidth="4" />
  </svg>
);

const RemoveIcon = () => (
  <svg width="56" height="56" viewBox="0 0 56 56" fill="none" stroke="#ccc" strokeWidth="2.5">
    <rect x="5" y="4" width="45" height="45" />
    <path d="M16 27 L39 27" strokeWidth="3" />
  </svg>
);

const MoreIcon = () => (
  <svg width="56" height="56" viewBox="0 0 56 56" fill="none" stroke="#ccc" strokeWidth="2.5">
    <circle cx="28" cy="27" r="24" />
    <path d="M16 20 L39 20 M16 33 L39 33" strokeWidth="3" />
  </svg>
);

const BottomBar = () => (
  <div className="h-[279px] bg-[#262626] whitespace-nowrap">
    <div className="h-[146px] flex items-start">
      <div className="w-[248px] flex flex-col items-center">
        <span className="mt-[12px] w-0 h-0 border-x-[13px] border-x-transparent border-b-[15px] border-b-[#aaa]" />
        <span className="mt-[15px] text-[32px] leading-[40px] text-[#988b83]">橡胶制品</span>
        <span className="mt-[18px] text-[34px] leading-[40px] text-[#e01010]">0.52%</span>
      </div>
      {[
        ['下单', <OrderIcon key="o" />],
        ['诊股', <DiagnoseIcon key="d" />],
        ['删自选', <RemoveIcon key="r" />],
        ['功能', <MoreIcon key="m" />],
      ].map(([label, icon]) => (
        <div key={label as string} className="w-[208px] pt-[23px] flex flex-col items-center">
          {icon}
          <span className="mt-[6px] text-[32px] leading-[40px] text-[#cccccc]">{label}</span>
        </div>
      ))}
    </div>
    <div className="mt-[50px] h-[40px] flex items-center pl-[280px]">
      <div className="w-[38px] flex flex-col gap-[10px]">
        <span className="h-[6px] rounded-full bg-[#aaa]" />
        <span className="h-[6px] rounded-full bg-[#aaa]" />
        <span className="h-[6px] rounded-full bg-[#aaa]" />
      </div>
      <span className="ml-[201px] w-[38px] h-[40px] rounded-[9px] border-[5px] border-[#aaa]" />
      <svg width="26" height="42" viewBox="0 0 26 42" className="ml-[207px]" fill="none" stroke="#aaa" strokeWidth="5" strokeLinecap="round">
        <path d="M23 3 L4 21 L23 39" />
      </svg>
    </div>
  </div>
);

export default function App() {
  return (
    <div className="w-[1080px] h-[2460px] overflow-hidden bg-white font-[Roboto,'Noto_Sans_CJK_SC',sans-serif]">
      <div className="h-[232px] bg-[#f2323b]">
        <Status />
        <NavBar />
      </div>
      <StatsRow />
      <RangeBar />
      <Notice />
      <div className="h-[13px] bg-[#f5f5f5]" />
      <PeriodTabs />
      <RangeTabs />
      <MaLegend />
      <MainChart />
      <TimeAxis />
      <Panels />
      <div className="mt-[8px] h-[12px] bg-[#f5f5f5]" />
      <CutOffTabs />
      <BottomBar />
    </div>
  );
}
